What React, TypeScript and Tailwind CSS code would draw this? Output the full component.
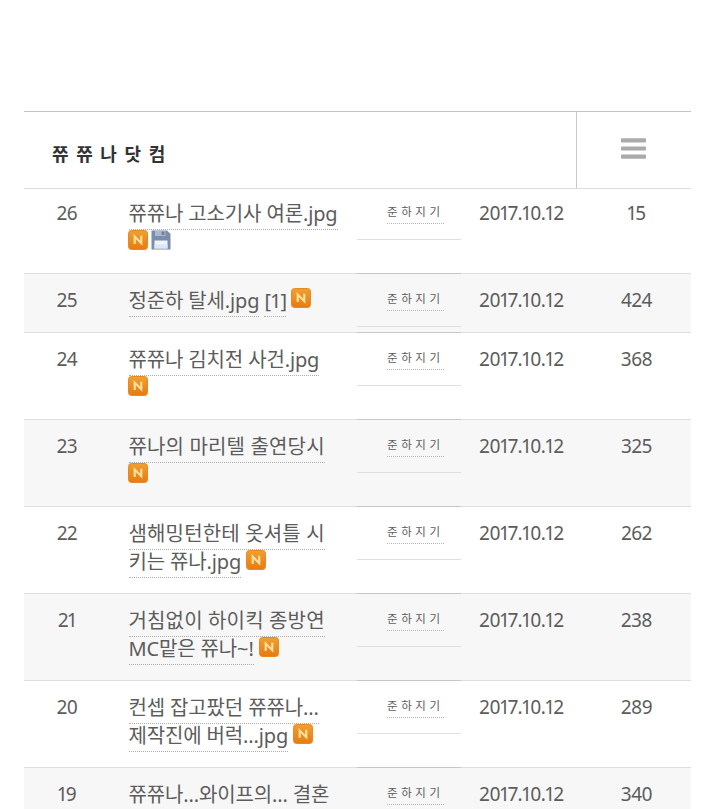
import clsx from "clsx";

type Line = { parts: string[]; isNew?: boolean; file?: boolean };

type Post = {
  id: number;
  lines: Line[];
  date: string;
  views: number;
};

const posts: Post[] = [
  {
    id: 26,
    lines: [{ parts: ["쮸쮸나 고소기사 여론.jpg"] }, { parts: [], isNew: true, file: true }],
    date: "2017.10.12",
    views: 15,
  },
  {
    id: 25,
    lines: [{ parts: ["정준하 탈세.jpg", "[1]"], isNew: true }],
    date: "2017.10.12",
    views: 424,
  },
  {
    id: 24,
    lines: [{ parts: ["쮸쮸나 김치전 사건.jpg"] }, { parts: [], isNew: true }],
    date: "2017.10.12",
    views: 368,
  },
  {
    id: 23,
    lines: [{ parts: ["쮸나의 마리텔 출연당시"] }, { parts: [], isNew: true }],
    date: "2017.10.12",
    views: 325,
  },
  {
    id: 22,
    lines: [{ parts: ["샘해밍턴한테 옷셔틀 시"] }, { parts: ["키는 쮸나.jpg"], isNew: true }],
    date: "2017.10.12",
    views: 262,
  },
  {
    id: 21,
    lines: [{ parts: ["거침없이 하이킥 종방연"] }, { parts: ["MC맡은 쮸나~!"], isNew: true }],
    date: "2017.10.12",
    views: 238,
  },
  {
    id: 20,
    lines: [{ parts: ["컨셉 잡고팠던 쮸쮸나..."] }, { parts: ["제작진에 버럭...jpg"], isNew: true }],
    date: "2017.10.12",
    views: 289,
  },
  {
    id: 19,
    lines: [{ parts: ["쮸쮸나...와이프의... 결혼"] }],
    date: "2017.10.12",
    views: 340,
  },
];

// Latin runs are set tighter than pure hangul ones
function tracking(text: string) {
  if (text.startsWith("[")) return "tracking-[-1px]";
  return /[a-z.~]/i.test(text) ? "tracking-[-0.14px]" : "tracking-[0.15px]";
}

function NewIcon() {
  return (
    <svg className="h-5 w-5 shrink-0" viewBox="0 0 20 20">
      <defs>
        <linearGradient id="new-fill" x1="0" y1="0" x2="0" y2="1">
          <stop offset="0" stopColor="#f0a032" />
          <stop offset="1" stopColor="#e87a10" />
        </linearGradient>
      </defs>
      <rect x="0.5" y="0.5" width="19" height="19" rx="3" fill="url(#new-fill)" stroke="#e58a25" />
      <path d="M6.7 14V6.6L13.3 13.2V5.8" fill="none" stroke="#ffe2a0" strokeWidth="2.1" />
    </svg>
  );
}

function FileIcon() {
  return (
    <svg className="-ml-[2px] h-5 w-5 shrink-0" viewBox="0 0 20 20">
      <path d="M0.5 0.5H16L19.5 4V19.5H0.5Z" fill="#7d8ca8" />
      <path d="M4 1H14.5V6H4Z" fill="#a9b9d2" />
      <path d="M10.5 1.5H13.5V5H10.5Z" fill="#71809d" />
      <path d="M3.5 10.5H16.5V18.5H3.5Z" fill="#edf4fc" />
      <path d="M3.5 14.5H16.5V18.5H3.5Z" fill="#d9e7f7" />
    </svg>
  );
}

function MenuIcon() {
  return (
    <svg className="h-[21px] w-[25px]" viewBox="0 0 25 21" fill="#aaaaaa">
      <rect y="0.2" width="25" height="4.2" rx="0.8" />
      <rect y="8.4" width="25" height="4.2" rx="0.8" />
      <rect y="16.6" width="25" height="4.2" rx="0.8" />
    </svg>
  );
}

function Row({ post, first, shaded }: { post: Post; first: boolean; shaded: boolean }) {
  return (
    <li
      className={clsx(
        "flex items-start border-t",
        first ? "-mt-[3px] h-[87px] border-transparent" : "border-[#dedede]",
        shaded && "bg-[#f7f7f7]"
      )}
    >
      <span className="w-[86px] pt-3 text-center text-[19px] leading-[29px] tracking-[-0.5px] proportional-nums">
        {post.id}
      </span>

      <div className="w-[229px] pt-3 pb-[18px] pl-[18.5px]">
        {post.lines.map((line, i) => (
          <div
            key={i}
            className={clsx(
              "flex h-7 gap-[5px] text-[20px] whitespace-nowrap",
              line.parts.length === 0 && "-ml-px"
            )}
          >
            {line.parts.map((part) => (
              <a
                key={part}
                className={clsx(
                  "h-[31px] border-b border-dotted border-[#adadad] leading-[29px]",
                  tracking(part)
                )}
              >
                {part}
              </a>
            ))}
            {line.isNew && (
              <span className={clsx("flex gap-[5px]", i > 0 ? "pt-[3px]" : "pt-[2px]")}>
                <NewIcon />
                {line.file && <FileIcon />}
              </span>
            )}
          </div>
        ))}
      </div>

      {/* Author box keeps its own borders inside the row */}
      <div
        className={clsx(
          "-mt-px ml-[18px] h-[54px] w-[104px] border-t border-b border-b-[#e0e0e0] pt-[15px] pl-[30px]",
          first ? "border-t-transparent" : "border-t-[#c6c6c6]"
        )}
      >
        <a className="block h-[22px] w-[57px] border-b border-dotted border-[#b4b4b4] text-[11.5px] leading-[19px] tracking-[3.6px] whitespace-nowrap">
          준하지기
        </a>
      </div>

      <span className="w-[121px] pt-3 text-center text-[19px] leading-[29px] tracking-[-0.4px] proportional-nums">
        {post.date}
      </span>
      <span className="w-[109px] pt-3 text-center text-[19px] leading-[29px] tracking-[-0.5px] proportional-nums">
        {post.views}
      </span>
    </li>
  );
}

export default function App() {
  return (
    <main className="h-[809px] overflow-hidden bg-white px-6 pt-[111px] font-['Noto_Sans','Noto_Sans_CJK_KR',sans-serif] text-[#5c5c5c]">
      <div className="w-[667px]">
        <header className="flex h-[78px] border-t border-b border-t-[#c4c4c4] border-b-[#dcdcdc]">
          <h1 className="flex flex-1 items-center pt-2 pl-7 text-[18px] font-bold tracking-[7.6px] text-[#333]">
            쮸쮸나닷컴
          </h1>
          <button className="flex w-[115px] items-center justify-center border-l border-[#c8c8c8] pr-px pb-[3px]">
            <MenuIcon />
          </button>
        </header>

        <ul>
          {posts.map((post, i) => (
            <Row key={post.id} post={post} first={i === 0} shaded={i % 2 === 1} />
          ))}
        </ul>
      </div>
    </main>
  );
}
